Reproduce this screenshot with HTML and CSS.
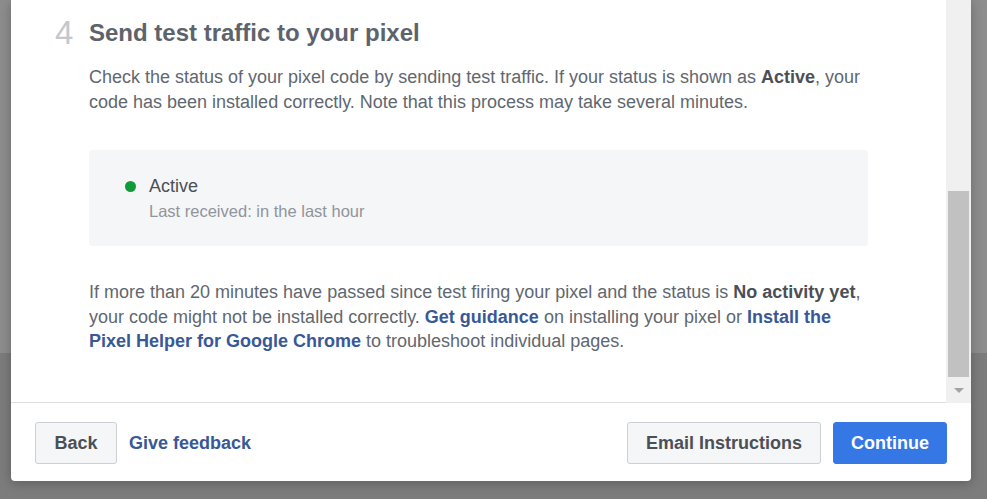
FILE: index.html
```html
<!DOCTYPE html>
<html lang="en">
<head>
<meta charset="utf-8">
<title>Send test traffic to your pixel</title>
<link rel="stylesheet" href="styles.css">
</head>
<body>
  <div class="dialog">
    <div class="scroller">
      <div class="content">
        <div class="step">
          <span class="step-num">4</span>
          <h2 class="step-title">Send test traffic to your pixel</h2>
        </div>
        <p class="text intro">Check the status of your pixel code by sending test traffic. If your status is shown as <b>Active</b>, your code has been installed correctly. Note that this process may take several minutes.</p>
        <div class="status">
          <div class="status-row">
            <span class="dot"></span>
            <span class="status-label">Active</span>
          </div>
          <div class="status-sub">Last received: in the last hour</div>
        </div>
        <p class="text help">If more than 20 minutes have passed since test firing your pixel and the status is <b>No activity yet</b>, your code might not be installed correctly. <a class="link" href="#">Get guidance</a> on installing your pixel or <a class="link" href="#">Install the Pixel Helper for Google Chrome</a> to troubleshoot individual pages.</p>
      </div>
      <div class="scrollbar">
        <div class="track-top"></div>
        <div class="thumb"></div>
        <div class="arrow-box"><span class="arrow"></span></div>
      </div>
    </div>
    <div class="footer">
      <div class="footer-left">
        <button class="btn btn-back">Back</button>
        <a class="link feedback" href="#">Give feedback</a>
      </div>
      <div class="footer-right">
        <button class="btn">Email Instructions</button>
        <button class="btn btn-primary">Continue</button>
      </div>
    </div>
  </div>
</body>
</html>
```
FILE: styles.css
```css
html, body {
  margin: 0;
  padding: 0;
}

body {
  height: 499px;
  overflow: hidden;
  background: linear-gradient(#8d8d8d 0, #8d8d8d 353px, #7c7c7c 353px, #7c7c7c 100%);
  font-family: "Liberation Sans", Arial, sans-serif;
  color: #606770;
}

.dialog {
  margin-left: 11px;
  width: 960px;
  height: 481px;
  background: #fff;
  border-radius: 0 0 4px 4px;
  box-shadow: 0 2px 12px rgba(0, 0, 0, 0.25);
  display: flex;
  flex-direction: column;
}

.scroller {
  height: 402px;
  display: flex;
  border-bottom: 1px solid #dddfe2;
  box-sizing: content-box;
}

.content {
  flex: 1;
  padding: 15px 78px 0;
  overflow: hidden;
}

.step {
  display: flex;
  align-items: center;
  margin-left: -34px;
  height: 36px;
}

.step-num {
  width: 34px;
  font-family: "Liberation Sans", Arial, sans-serif;
  font-weight: normal;
  font-size: 33px;
  line-height: 36px;
  color: #c4c8cd;
}

.step-title {
  margin: 0;
  font-size: 24px;
  line-height: 28px;
  font-weight: bold;
  color: #5d636c;
}

.text {
  margin: 0;
  font-size: 18px;
  line-height: 24.5px;
  color: #606770;
}

.text b {
  color: #4b4f56;
}

.intro {
  margin-top: 14px;
}

.status {
  margin-top: 36px;
  background: #f5f6f7;
  border-radius: 3px;
  padding: 24px 36px 22px;
}

.status-row {
  display: flex;
  align-items: center;
  gap: 13px;
  height: 24px;
}

.dot {
  width: 11px;
  height: 11px;
  border-radius: 50%;
  background: #0f9b37;
}

.status-label {
  font-size: 18px;
  line-height: 24px;
  color: #4b4f56;
}

.status-sub {
  margin-left: 24px;
  font-size: 16.5px;
  line-height: 26px;
  color: #90949c;
}

.help {
  margin-top: 34px;
}

.link {
  color: #385898;
  font-weight: bold;
  text-decoration: none;
}

.scrollbar {
  width: 25px;
  background: #f0f0f0;
  padding: 0 2px;
  box-sizing: border-box;
  display: flex;
  flex-direction: column;
  margin-bottom: -1px;
  position: relative;
  z-index: 1;
}

.track-top {
  height: 191px;
}

.thumb {
  height: 186px;
  background: #c1c1c1;
}

.arrow-box {
  flex: 1;
  display: flex;
  justify-content: center;
  align-items: center;
}

.arrow {
  width: 0;
  height: 0;
  border-left: 5px solid transparent;
  border-right: 5px solid transparent;
  border-top: 5px solid #a3a3a3;
}

.footer {
  flex: 1;
  display: flex;
  justify-content: space-between;
  align-items: flex-start;
  padding: 19px 24px 0;
}

.footer-left,
.footer-right {
  display: flex;
  align-items: center;
  gap: 12px;
}

.btn {
  height: 42px;
  padding: 0 18px;
  border: 1px solid #ccd0d5;
  border-radius: 3px;
  background: #f5f6f7;
  color: #4b4f56;
  font-family: "Liberation Sans", Arial, sans-serif;
  font-weight: bold;
  font-size: 18px;
}

.btn-back {
  padding: 0 18.5px;
}

.btn-primary {
  background: #3578e5;
  border-color: #3578e5;
  color: #fff;
  padding: 0 17px;
}

.feedback {
  font-size: 18px;
}
```
